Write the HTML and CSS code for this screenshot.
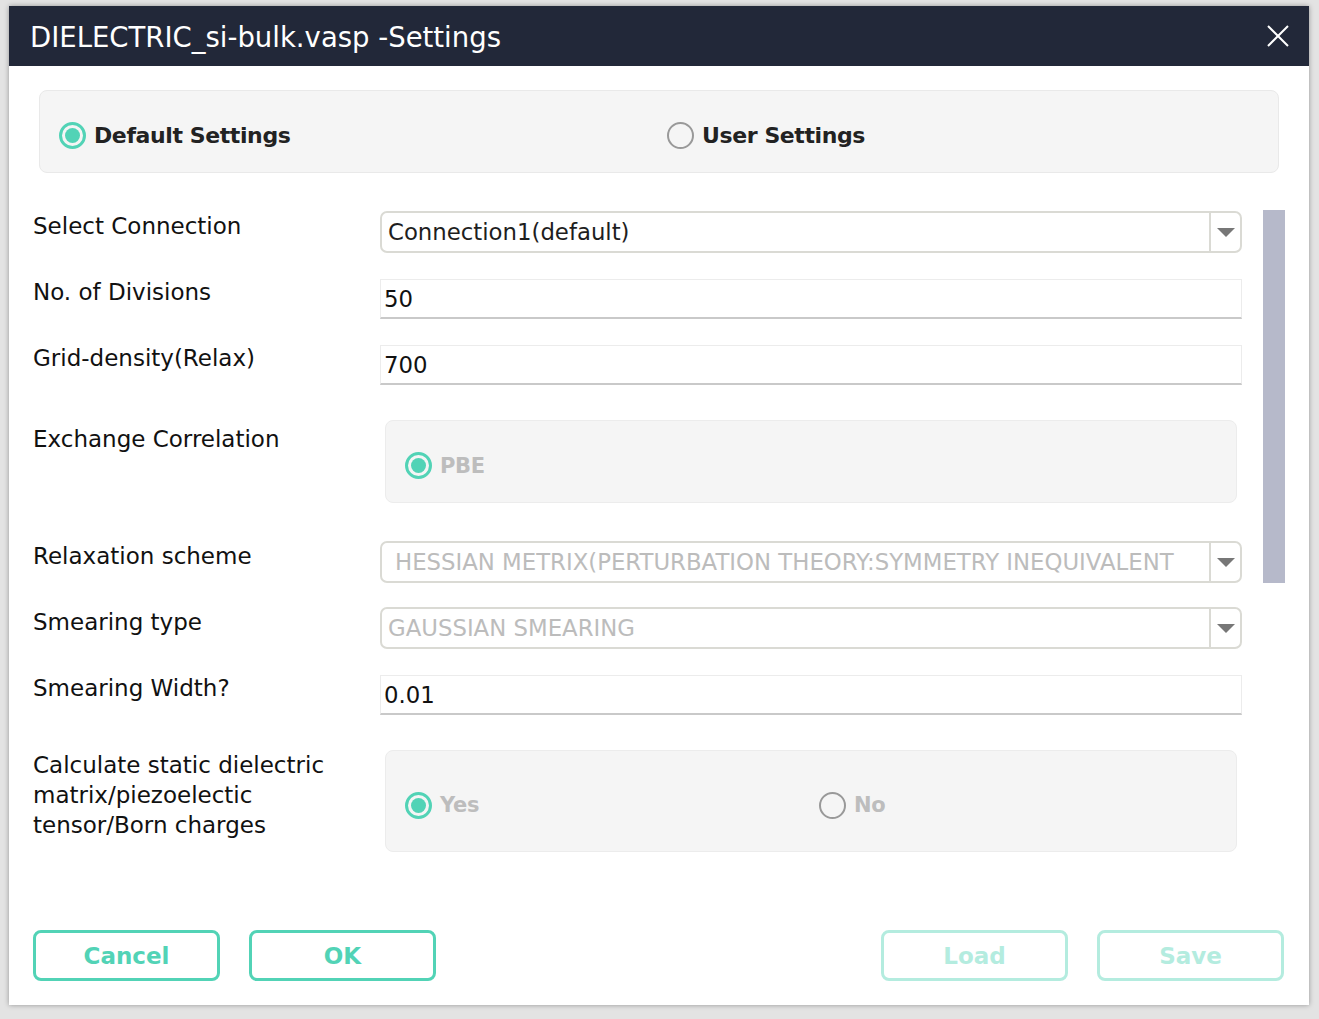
FILE: index.html
```html
<!DOCTYPE html>
<html>
<head>
<meta charset="utf-8">
<title>Settings</title>
<link rel="stylesheet" href="styles.css">
</head>
<body>
<div class="dialog">
  <header class="titlebar">
    <span class="title">DIELECTRIC_si-bulk.vasp -Settings</span>
    <svg class="close" width="22" height="22" viewBox="0 0 22 22"><path d="M1 1 L21 21 M21 1 L1 21" stroke="#ffffff" stroke-width="2" fill="none"/></svg>
  </header>

  <div class="mode-group">
    <label class="radio strong"><span class="dot on"></span>Default Settings</label>
    <label class="radio strong"><span class="dot"></span>User Settings</label>
  </div>

  <div class="body">
    <div class="form">
      <div class="lbl">Select Connection</div>
      <div class="select"><span class="val">Connection1(default)</span><span class="drop"><span class="tri"></span></span></div>

      <div class="lbl">No. of Divisions</div>
      <div class="input">50</div>

      <div class="lbl">Grid-density(Relax)</div>
      <div class="input">700</div>

      <div class="lbl lbl-box">Exchange Correlation</div>
      <div class="optbox optbox-short">
        <label class="radio muted"><span class="dot on"></span>PBE</label>
      </div>

      <div class="lbl">Relaxation scheme</div>
      <div class="select disabled"><span class="val indent">HESSIAN METRIX(PERTURBATION THEORY:SYMMETRY INEQUIVALENT</span><span class="drop"><span class="tri"></span></span></div>

      <div class="lbl">Smearing type</div>
      <div class="select disabled"><span class="val">GAUSSIAN SMEARING</span><span class="drop"><span class="tri"></span></span></div>

      <div class="lbl">Smearing Width?</div>
      <div class="input">0.01</div>

      <div class="lbl lbl-tall">Calculate static dielectric<br>matrix/piezoelectic<br>tensor/Born charges</div>
      <div class="optbox optbox-tall">
        <label class="radio muted"><span class="dot on"></span>Yes</label>
        <label class="radio muted"><span class="dot"></span>No</label>
      </div>
    </div>
    <div class="scroll"><div class="thumb"></div></div>
  </div>

  <footer class="footer">
    <div class="btn-group">
      <button class="btn">Cancel</button>
      <button class="btn">OK</button>
    </div>
    <div class="btn-group">
      <button class="btn off">Load</button>
      <button class="btn off">Save</button>
    </div>
  </footer>
</div>
</body>
</html>
```

FILE: styles.css
```css
* { box-sizing: border-box; }

html, body {
  margin: 0;
  padding: 0;
}

body {
  background: #e3e3e3;
  font-family: "DejaVu Sans", "Liberation Sans", sans-serif;
  width: 1319px;
  height: 1019px;
  overflow: hidden;
}

.dialog {
  width: 1300px;
  height: 999px;
  margin: 6px 0 0 9px;
  background: #ffffff;
  box-shadow: 0 0 5px rgba(0, 0, 0, 0.35);
  display: flex;
  flex-direction: column;
}

.titlebar {
  height: 60px;
  flex: none;
  background: #222839;
  display: flex;
  align-items: center;
  justify-content: space-between;
  padding: 0 20px 0 21px;
}

.title {
  color: #ffffff;
  font-size: 27.5px;
  line-height: 1;
  padding-top: 4px;
}

.close { display: block; }

.mode-group {
  margin: 24px 30px 0 30px;
  height: 83px;
  flex: none;
  background: #f5f5f5;
  border: 1px solid #e9e9e9;
  border-radius: 8px;
  display: grid;
  grid-template-columns: 608px 1fr;
  align-items: center;
  padding: 8px 0 0 19px;
}

.radio {
  display: flex;
  align-items: center;
  gap: 8px;
  white-space: nowrap;
}

.strong {
  font-weight: bold;
  font-size: 22px;
  letter-spacing: -0.4px;
  color: #222222;
}

.muted {
  font-weight: bold;
  font-size: 21px;
  letter-spacing: -0.3px;
  color: #bdbdbd;
}

.dot {
  width: 27px;
  height: 27px;
  border-radius: 50%;
  border: 2px solid #999999;
  flex: none;
  display: flex;
  align-items: center;
  justify-content: center;
}

.dot.on {
  border: 3px solid #52d3b6;
}

.dot.on::after {
  content: "";
  width: 15px;
  height: 15px;
  border-radius: 50%;
  background: #52d3b6;
}

.body {
  display: flex;
  margin-top: 38px;
  padding-left: 24px;
}

.form {
  display: grid;
  grid-template-columns: 347px 862px;
  row-gap: 24px;
  align-items: start;
}

.lbl {
  font-size: 23px;
  line-height: 30px;
  color: #111111;
  white-space: nowrap;
}

.lbl-box { padding-top: 15px; }
.lbl-tall { padding-top: 11px; }

.select {
  height: 42px;
  border: 2px solid #dadad4;
  border-radius: 7px;
  display: flex;
  align-items: center;
  overflow: hidden;
  background: #ffffff;
}

.select .val {
  flex: 1;
  min-width: 0;
  overflow: hidden;
  white-space: nowrap;
  padding-left: 6px;
  font-size: 22.8px;
  color: #1e1e1e;
}

.select .val.indent { padding-left: 13px; }

.select.disabled .val { color: #bcbcbc; }

.drop {
  width: 31px;
  height: 100%;
  flex: none;
  border-left: 2px solid #dadad4;
  display: flex;
  align-items: center;
  justify-content: center;
}

.tri {
  width: 0;
  height: 0;
  border-left: 9px solid transparent;
  border-right: 9px solid transparent;
  border-top: 9px solid #777777;
}

.input {
  margin-top: 2px;
  height: 40px;
  border: 1px solid #ececec;
  border-bottom: 2px solid #c9c9c9;
  padding-left: 3px;
  display: flex;
  align-items: center;
  font-size: 22.8px;
  color: #111111;
}

.optbox {
  margin: 11px 5px 0 5px;
  background: #f5f5f5;
  border: 1px solid #ececec;
  border-radius: 8px;
  display: grid;
  grid-template-columns: 414px 1fr;
  align-items: center;
  padding: 8px 0 0 19px;
}

.optbox-short {
  height: 83px;
  margin-bottom: 14px;
}

.optbox-tall { height: 102px; }

.scroll {
  margin-left: 21px;
  width: 22px;
  margin-top: -1px;
}

.thumb {
  height: 373px;
  background: #b6b9ca;
}

.footer {
  margin-top: auto;
  display: flex;
  justify-content: space-between;
  padding: 0 25px 24px 24px;
}

.btn-group {
  display: flex;
  gap: 29px;
}

.btn {
  width: 187px;
  height: 51px;
  background: #ffffff;
  border: 3px solid #52d3b6;
  border-radius: 8px;
  font-family: "DejaVu Sans", "Liberation Sans", sans-serif;
  font-weight: bold;
  font-size: 23px;
  color: #52d3b6;
  padding: 0;
}

.btn.off {
  border-color: #b4ecdf;
  color: #b4ecdf;
}
```
